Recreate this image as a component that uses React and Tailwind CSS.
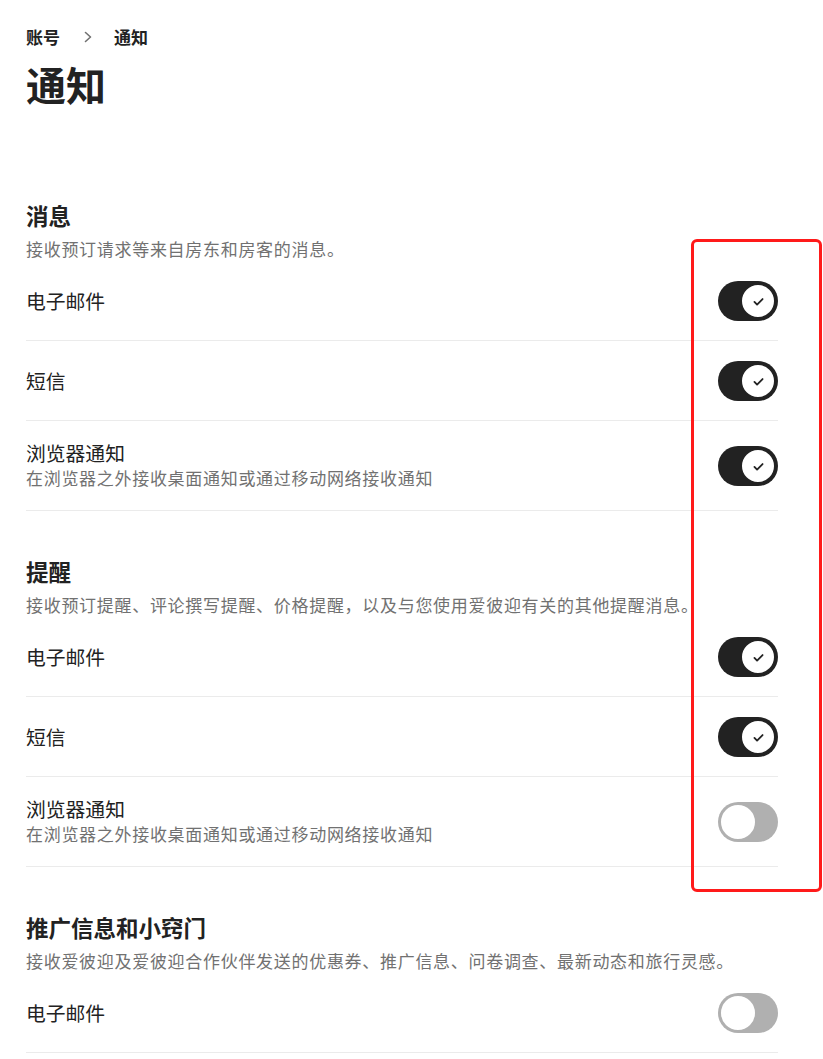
import React from "react";

const font = { fontFamily: '"Noto Sans CJK SC", "Noto Sans", sans-serif' };

function Toggle({ on }) {
  if (on) {
    return (
      <div className="relative h-[40px] w-[60px] shrink-0 rounded-full bg-[#222222]">
        <div className="absolute right-[2px] top-[2px] flex h-[36px] w-[36px] items-center justify-center rounded-full border-2 border-[#222222] bg-white">
          <svg width="13" height="13" viewBox="0 0 32 32" fill="none" stroke="#222222" strokeWidth="4.5" strokeLinecap="round" strokeLinejoin="round">
            <path d="M6 17l6.5 6.5L26 10" />
          </svg>
        </div>
      </div>
    );
  }
  return (
    <div className="relative h-[40px] w-[60px] shrink-0 rounded-full bg-[#b0b0b0]">
      <div className="absolute left-[1px] top-[1px] h-[38px] w-[38px] rounded-full border-2 border-[#b0b0b0] bg-white" />
    </div>
  );
}

function Row({ label, sub, on }) {
  return (
    <div className="flex items-center justify-between border-b border-[#ebebeb] pt-5 pb-[19px]">
      <div className="flex flex-col">
        <div className="text-[19.8px] leading-[24px] text-[#222222]">{label}</div>
        {sub && <div className="text-[17px] leading-[26px] tracking-[0.7px] text-[#717171]">{sub}</div>}
      </div>
      <Toggle on={on} />
    </div>
  );
}

function Section({ title, desc, rows, first }) {
  return (
    <div className={first ? "" : "mt-[46px]"}>
      <h2 className="text-[22.5px] font-bold leading-[28px] text-[#222222]">{title}</h2>
      <p className="mt-2 text-[17px] leading-[24px] tracking-[0.7px] text-[#717171]">{desc}</p>
      {rows.map((r, i) => (
        <Row key={i} {...r} />
      ))}
    </div>
  );
}

export default function App() {
  const sub = "在浏览器之外接收桌面通知或通过移动网络接收通知";
  return (
    <div className="relative min-h-[1059px] w-[823px] overflow-hidden bg-white" style={font}>
      <div className="w-[752px] pl-[26px] pt-[25px] box-content">
        <div className="flex items-center text-[17px] font-semibold leading-[24px] text-[#222222]">
          <span>账号</span>
          <svg className="ml-[22px] mr-[20px]" width="12" height="14" viewBox="0 0 12 14" fill="none" stroke="#717171" strokeWidth="1.6" strokeLinecap="round" strokeLinejoin="round">
            <path d="M3.5 2.5l5 4.5-5 4.5" />
          </svg>
          <span>通知</span>
        </div>
        <h1 className="mt-[11px] text-[40px] font-bold leading-[48px] text-[#222222]">通知</h1>
        <div className="mt-[93px]">
          <Section
            first
            title="消息"
            desc="接收预订请求等来自房东和房客的消息。"
            rows={[
              { label: "电子邮件", on: true },
              { label: "短信", on: true },
              { label: "浏览器通知", sub, on: true },
            ]}
          />
          <Section
            title="提醒"
            desc="接收预订提醒、评论撰写提醒、价格提醒，以及与您使用爱彼迎有关的其他提醒消息。"
            rows={[
              { label: "电子邮件", on: true },
              { label: "短信", on: true },
              { label: "浏览器通知", sub, on: false },
            ]}
          />
          <Section
            title="推广信息和小窍门"
            desc="接收爱彼迎及爱彼迎合作伙伴发送的优惠券、推广信息、问卷调查、最新动态和旅行灵感。"
            rows={[{ label: "电子邮件", on: false }]}
          />
        </div>
      </div>
      <div className="pointer-events-none absolute left-[691px] top-[239px] h-[653px] w-[131px] rounded-[6px] border-[3px] border-[#ff1a1a]" />
    </div>
  );
}
